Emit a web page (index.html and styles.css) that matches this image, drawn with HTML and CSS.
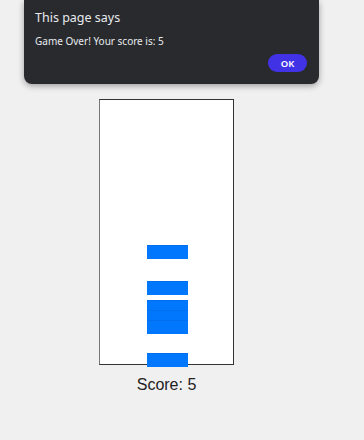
FILE: index.html
```html
<!DOCTYPE html>
<html lang="en">
<head>
  <meta charset="UTF-8">
  <title>Stack Game</title>
  <link rel="stylesheet" href="styles.css">
</head>
<body>
  <div class="page">
    <div id="game" class="game">
      <div class="block" style="top: 145px;"></div>
      <div class="block" style="top: 181px;"></div>
      <div class="block" style="top: 200px;"></div>
      <div class="block" style="top: 210px;"></div>
      <div class="block" style="top: 220px;"></div>
      <div class="block" style="top: 253px;"></div>
    </div>
    <div id="score" class="score">Score: 5</div>
  </div>

  <div class="dialog">
    <div class="dialog-title">This page says</div>
    <div class="dialog-message">Game Over! Your score is: 5</div>
    <div class="dialog-actions">
      <button class="dialog-btn">OK</button>
    </div>
  </div>
</body>
</html>
```

FILE: styles.css
```css
* {
  margin: 0;
  padding: 0;
  box-sizing: border-box;
}

:root {
  --bg: #f0f0f0;
  --block: #0177fe;
  --dialog: #292a2d;
  --accent: #4132e6;
}

body {
  background: var(--bg);
  font-family: 'Liberation Sans', Arial, sans-serif;
  width: 364px;
  height: 440px;
  overflow: hidden;
}

.page {
  width: 333px;
  padding-top: 99px;
  display: flex;
  flex-direction: column;
  align-items: center;
}

.game {
  position: relative;
  width: 135px;
  height: 266px;
  background: #fff;
  border: 1px solid #333;
  border-left-color: #777;
}

.block {
  position: absolute;
  left: 47px;
  width: 41px;
  height: 14px;
  background: var(--block);
  border-top: 1px solid rgba(0, 50, 120, 0.12);
}

.score {
  margin-top: 11px;
  font-size: 16px;
  color: #222;
}

.dialog {
  position: absolute;
  top: 0;
  left: 24px;
  width: 295px;
  height: 84px;
  background: var(--dialog);
  border-radius: 0 0 8px 8px;
  box-shadow: 0 2px 6px rgba(0, 0, 0, 0.35);
  padding: 10px 11px 0 11px;
  font-family: 'Noto Sans', 'Open Sans', sans-serif;
  color: #e8eaed;
}

.dialog-title {
  font-size: 12.5px;
  line-height: 16px;
}

.dialog-message {
  margin-top: 8px;
  font-size: 10px;
  line-height: 14px;
}

.dialog-actions {
  display: flex;
  justify-content: flex-end;
  margin-top: 6px;
  padding-right: 1px;
}

.dialog-btn {
  width: 39px;
  height: 18px;
  border: none;
  border-radius: 9px;
  background: var(--accent);
  color: #fff;
  font-family: 'Noto Sans', sans-serif;
  font-size: 9.5px;
  font-weight: 600;
}
```
